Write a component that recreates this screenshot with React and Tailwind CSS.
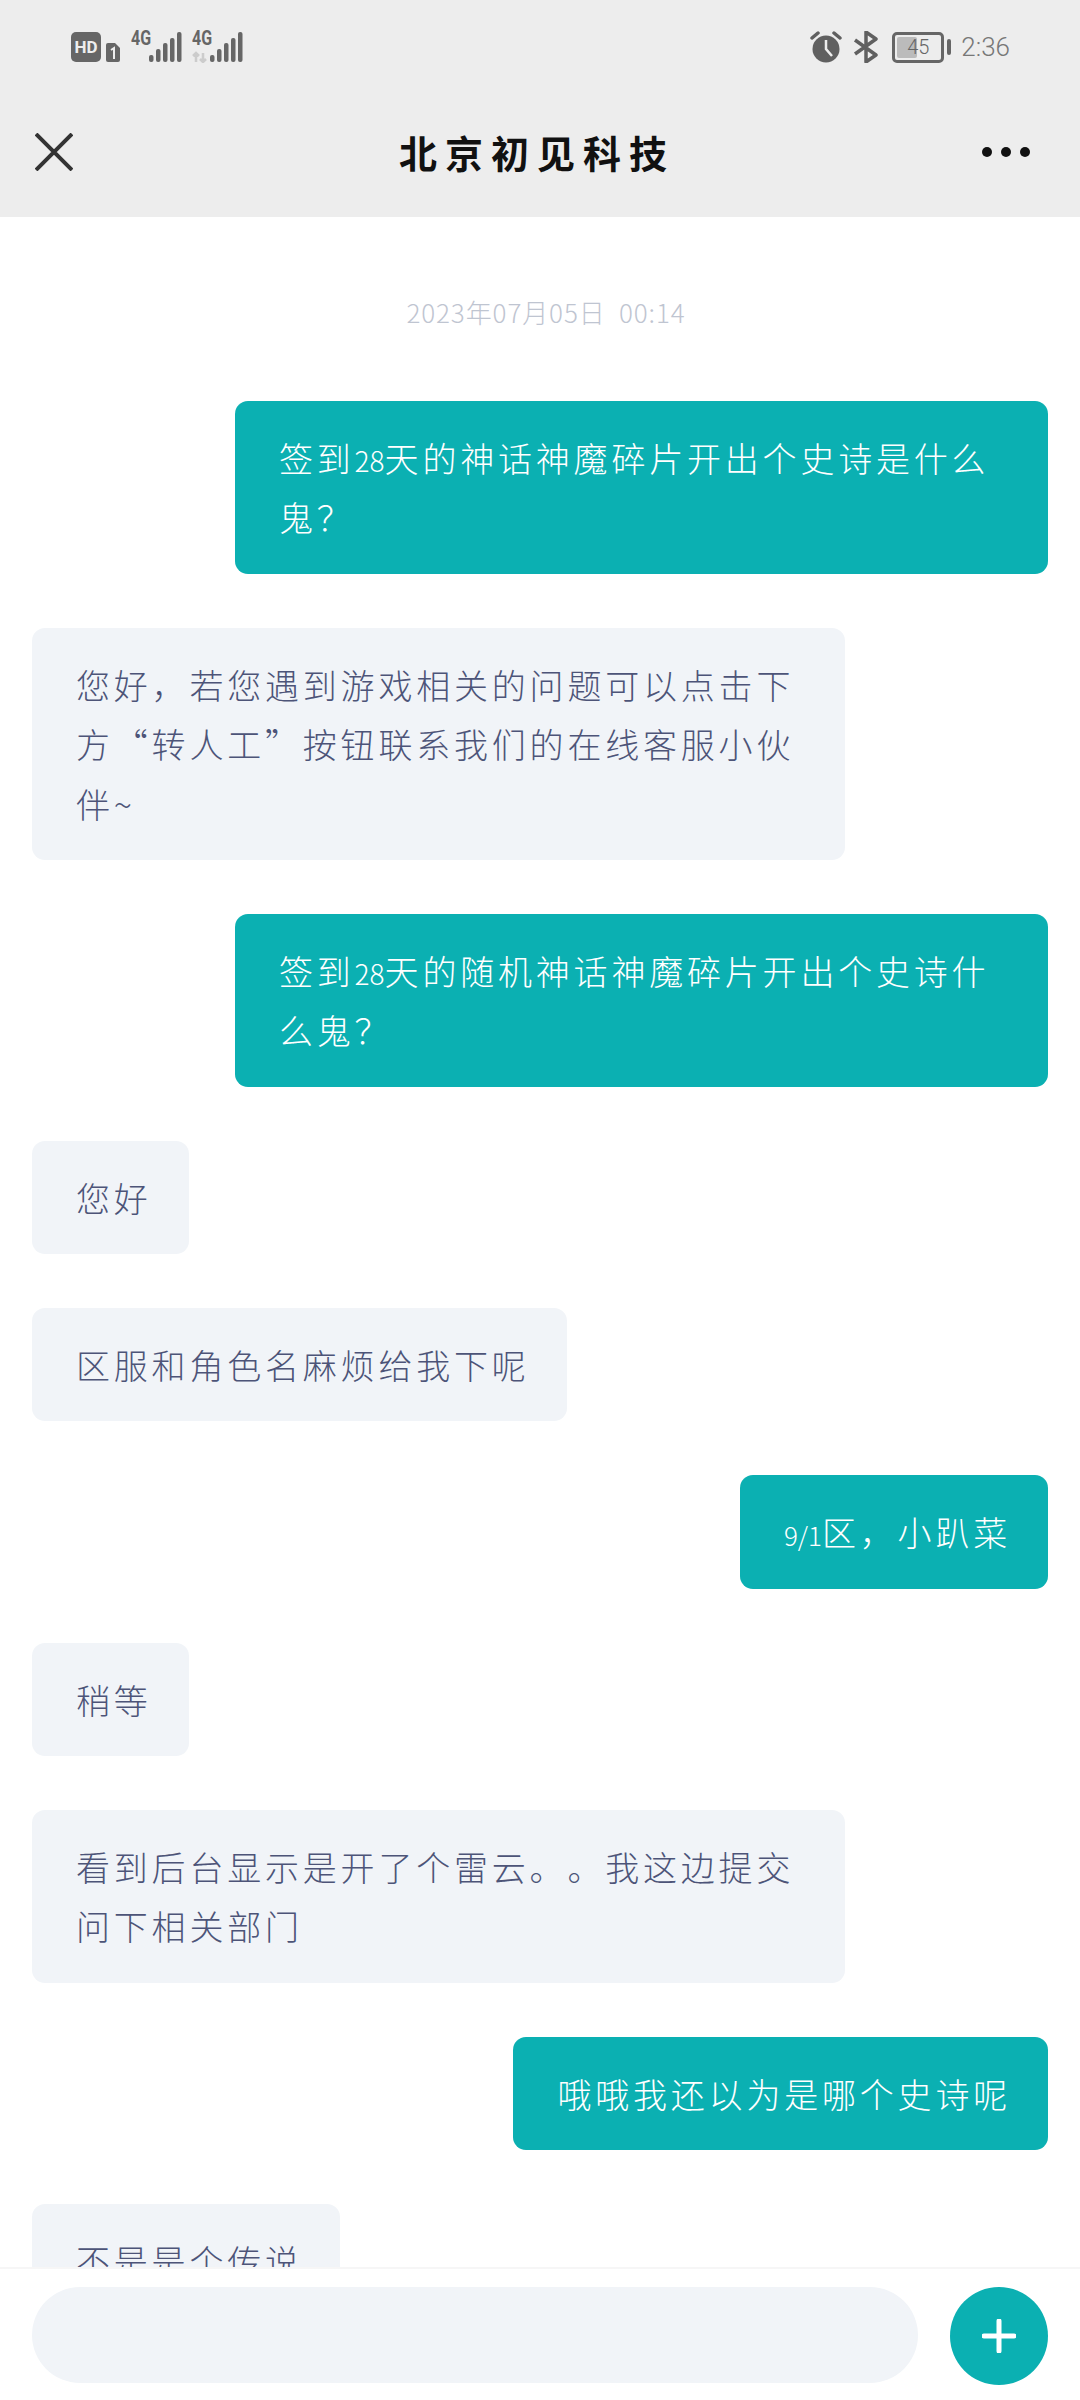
const Num = ({ children, className }) => (
  <span className={`leading-none tracking-normal ${className}`}>{children}</span>
);

const MESSAGES = [
  { id: 1, mine: true, text: <>签到<Num className="text-[28px]">28</Num>天的神话神魔碎片开出个史诗是什么鬼？</> },
  { id: 2, mine: false, text: "您好，若您遇到游戏相关的问题可以点击下方“转人工”按钮联系我们的在线客服小伙伴~" },
  { id: 3, mine: true, text: <>签到<Num className="text-[28px]">28</Num>天的随机神话神魔碎片开出个史诗什么鬼？</> },
  { id: 4, mine: false, text: "您好" },
  { id: 5, mine: false, text: "区服和角色名麻烦给我下呢" },
  { id: 6, mine: true, text: <><Num className="text-[26px]">9/1</Num>区，小趴菜</> },
  { id: 7, mine: false, text: "稍等" },
  { id: 8, mine: false, text: "看到后台显示是开了个雷云。。我这边提交问下相关部门" },
  { id: 9, mine: true, text: "哦哦我还以为是哪个史诗呢" },
  { id: 10, mine: false, text: "不是是个传说" },
];

const CJK = { fontFamily: '"Noto Sans CJK SC", "Noto Sans", sans-serif' };
const ROBOTO = { fontFamily: "Roboto, sans-serif" };

function Signal({ arrows }) {
  return (
    <div className="relative h-[32px] w-[52px]">
      <span className="absolute left-0 top-[-4px] origin-top-left scale-x-[0.8] text-[20px] font-bold leading-[22px] text-[#666]" style={ROBOTO}>
        4G
      </span>
      <svg className="absolute left-0 top-0" width="52" height="32" viewBox="0 0 52 32">
        {arrows && <path d="M4 31v-9M1 25l3-3 3 3M11 22v9M8 28l3 3 3-3" stroke="#ccc" strokeWidth="2.5" fill="none" />}
        <g fill="#666">
          <rect x="18" y="24" width="4.5" height="7" rx="2" />
          <rect x="25" y="18" width="4.5" height="13" rx="2" />
          <rect x="32" y="12" width="4.5" height="19" rx="2" />
          <rect x="39" y="7" width="4.5" height="24" rx="2" />
          <rect x="46" y="1" width="4.5" height="30" rx="2" />
        </g>
      </svg>
    </div>
  );
}

function StatusBar() {
  return (
    <div className="flex h-[94px] items-start justify-between pl-[71px] pr-[70px] pt-[31px]">
      <div className="flex items-center">
        <div className="flex h-[30px] w-[30px] items-center justify-center rounded-[5px] bg-[#666] text-[17px] font-bold leading-none text-[#eee]" style={ROBOTO}>
          HD
        </div>
        <svg className="ml-[5px] mt-[10px]" width="14" height="19" viewBox="0 0 14 19">
          <path d="M2 0h7l5 5v12a2 2 0 0 1-2 2H2a2 2 0 0 1-2-2V2a2 2 0 0 1 2-2z" fill="#666" />
          <path d="M5 7l3-2v11" stroke="#eee" strokeWidth="2" fill="none" />
        </svg>
        <div className="ml-[11px]">
          <Signal />
        </div>
        <div className="ml-[9px]">
          <Signal arrows />
        </div>
      </div>
      <div className="flex items-center">
        <svg width="32" height="32" viewBox="0 0 32 32">
          <circle cx="16" cy="18" r="13.5" fill="#606060" />
          <path d="M16 9v9l6 7" stroke="#eee" strokeWidth="2.5" fill="none" />
          <path d="M2 7l6-5M30 7l-6-5" stroke="#606060" strokeWidth="3.5" strokeLinecap="round" />
        </svg>
        <svg className="ml-[11px]" width="26" height="32" viewBox="0 0 26 32">
          <path d="M2 9l21 15-10 7V1l10 7L2 23" stroke="#606060" strokeWidth="3.5" fill="none" strokeLinejoin="round" />
        </svg>
        <div className="relative ml-[13px] flex h-[31px] w-[52px] items-center justify-center rounded-[5px] border-[3px] border-[#666] text-[#666]">
          <div className="absolute bottom-[2px] left-[2px] top-[2px] w-[20px] rounded-[2px] bg-[#bbb]" />
          <span className="relative text-[20px] leading-none" style={{ ...ROBOTO, fontWeight: 300 }}>45</span>
        </div>
        <div className="ml-[3px] h-[16px] w-[4px] rounded-full bg-[#666]" />
        <span className="ml-[10px] text-[26px] leading-none text-[#777]" style={{ ...ROBOTO, fontWeight: 300 }}>2:36</span>
      </div>
    </div>
  );
}

function Bubble({ mine, text }) {
  return (
    <div className={`flex ${mine ? "justify-end" : "justify-start"}`}>
      <div
        className={`max-w-[813px] rounded-[13px] py-[26.9px] pl-[44px] pr-[37px] text-[34px] font-light leading-[59.5px] tracking-[3.8px] [text-spacing-trim:space-all] ${
          mine ? "bg-[#0bb0b2] text-white" : "bg-[#f1f4f8] text-[#4d5478]"
        }`}
      >
        {text}
      </div>
    </div>
  );
}

export default function App() {
  return (
    <div className="flex h-[2400px] w-[1080px] flex-col overflow-hidden bg-white" style={CJK}>
      <header className="h-[217px] shrink-0 bg-[#ededed]">
        <StatusBar />
        <div className="flex items-center justify-between pl-[35px] pr-[50px] pt-[32px]">
          <div className="w-[57px]">
            <svg width="38" height="38" viewBox="0 0 38 38">
              <path d="M1 1l36 36M37 1L1 37" stroke="#333" strokeWidth="4" />
            </svg>
          </div>
          <h1 className="text-[38px] font-bold leading-[52px] tracking-[8px] text-[#111]">北京初见科技</h1>
          <div className="flex gap-[9px]">
            <span className="h-[10px] w-[10px] rounded-full bg-[#111]" />
            <span className="h-[10px] w-[10px] rounded-full bg-[#111]" />
            <span className="h-[10px] w-[10px] rounded-full bg-[#111]" />
          </div>
        </div>
      </header>

      <main className="min-h-0 flex-1 overflow-hidden px-[32px]">
        <p className="pb-[70px] pl-[12px] pt-[76px] text-center text-[26px] font-light leading-[38px] tracking-[0.9px] text-[#bfc5d1]">2023年07月05日&nbsp;&nbsp;00:14</p>
        <div className="flex flex-col gap-[54px]">
          {MESSAGES.map((m) => (
            <Bubble key={m.id} mine={m.mine} text={m.text} />
          ))}
        </div>
      </main>

      <footer className="flex h-[133px] shrink-0 items-start gap-[32px] border-t-2 border-[#f6f6f6] bg-white px-[32px] pt-[18px]">
        <div className="h-[96px] flex-1 rounded-full bg-[#f1f4f8]" />
        <button type="button" className="flex h-[98px] w-[98px] items-center justify-center rounded-full bg-[#0bb0b2]">
          <svg width="34" height="34" viewBox="0 0 34 34">
            <path d="M17 2v30M2 17h30" stroke="white" strokeWidth="5" strokeLinecap="round" />
          </svg>
        </button>
      </footer>
    </div>
  );
}
